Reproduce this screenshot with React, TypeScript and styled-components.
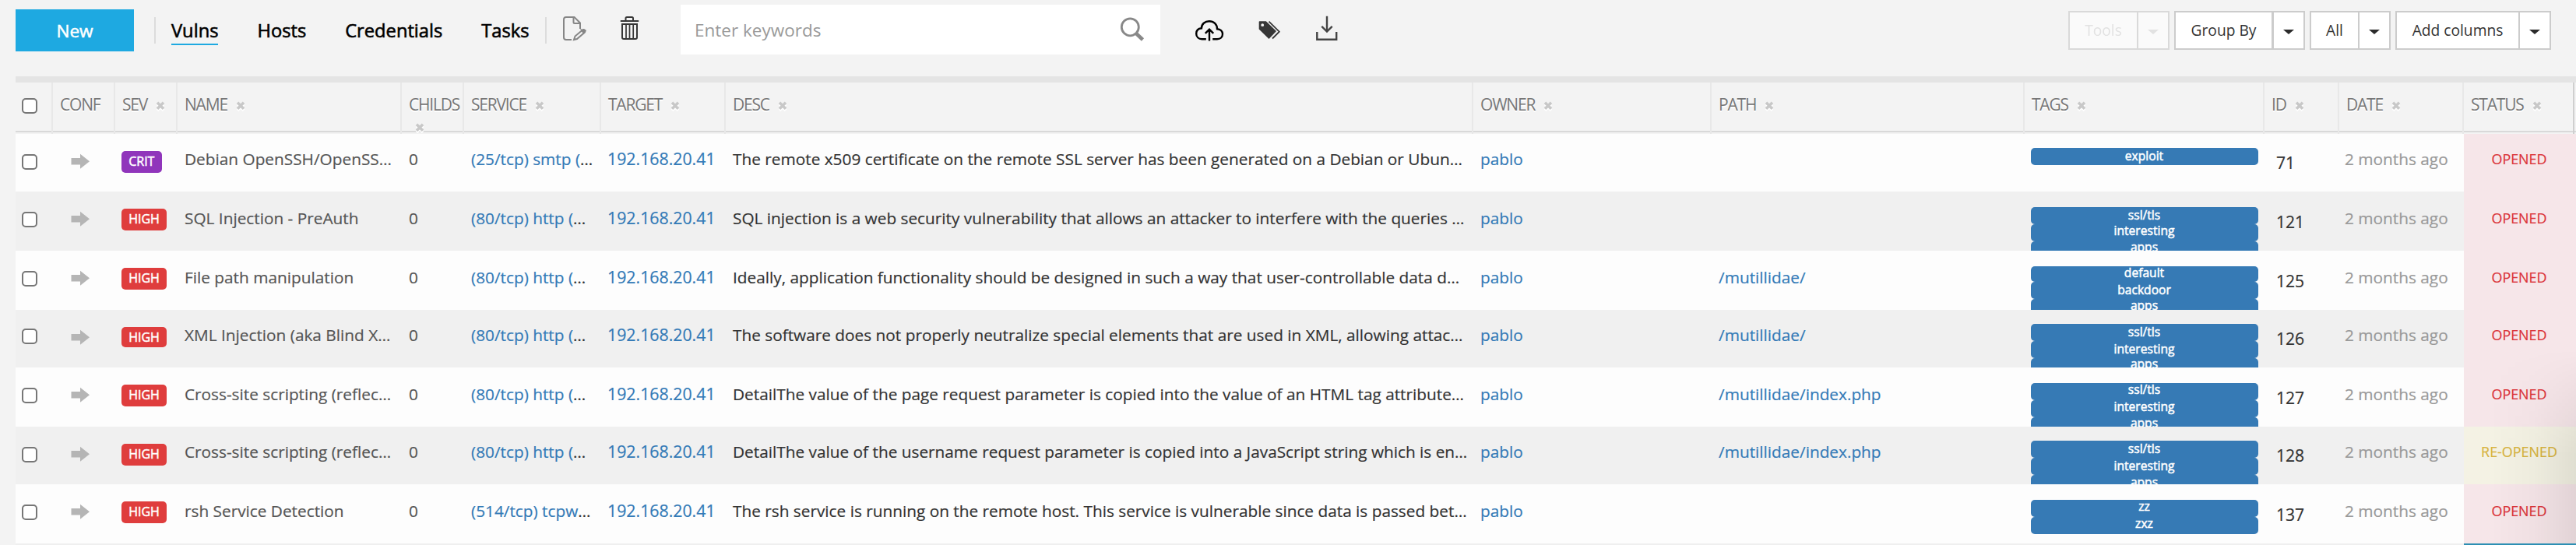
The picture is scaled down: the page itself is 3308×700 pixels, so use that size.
import React from "react";
import styled, { createGlobalStyle } from "styled-components";

const Global = createGlobalStyle`
  * { box-sizing: border-box; }
  body { margin: 0; background: #f3f3f3; overflow: hidden; }
`;

const COLUMNS =
  "48px 80px 80px 288px 80px 176px 160px 960px 306px 402px 308px 96px 160px 144px";

const Page = styled.main`
  position: relative;
  width: 3308px;
  height: 700px;
  overflow: hidden;
  background: #f3f3f3;
  color: #333;
  font-family: "Open Sans", sans-serif;
  font-size: 20.8px;
  white-space: nowrap;
`;

/* ---------- toolbar ---------- */

const Toolbar = styled.header`
  display: flex;
  align-items: flex-start;
  height: 98px;
  padding: 0 32px 0 20px;
`;

const NewButton = styled.button`
  width: 152px;
  height: 54px;
  margin-top: 12px;
  border: 0;
  background: #1ea9e1;
  color: #fff;
  font: 400 22.6px "Open Sans", sans-serif;
  -webkit-text-stroke: 0.5px;
  padding: 0;
`;

const Divider = styled.span<{ $left: number }>`
  width: 2px;
  height: 34px;
  margin: 22px 0 0 ${(p) => p.$left}px;
  background: #dcdcdc;
`;

const Nav = styled.nav`
  display: flex;
  gap: 50px;
  margin: 20px 0 0 20px;
  width: 461px;
`;

const NavLink = styled.a<{ $active?: boolean }>`
  height: 38px;
  line-height: 38px;
  color: #000;
  font-size: 23.7px;
  -webkit-text-stroke: 0.6px;
  border-bottom: 2px solid ${(p) => (p.$active ? "#1ea9e1" : "transparent")};
`;

const ToolIcon = styled.svg<{ $top: number; $left: number }>`
  flex: none;
  display: block;
  margin: ${(p) => p.$top}px 0 0 ${(p) => p.$left}px;
`;

const SearchBox = styled.div`
  display: flex;
  justify-content: space-between;
  width: 616px;
  height: 64px;
  margin: 6px 0 0 52px;
  padding: 0 20px 0 18px;
  background: #fff;
  color: #999;
  font-size: 22.5px;
  line-height: 66px;
`;

const Actions = styled.div`
  display: flex;
  gap: 6px;
  margin: 14px 0 0 auto;
`;

const SplitButton = styled.div<{ $muted?: boolean }>`
  display: flex;
  height: 50px;
  border: 2px solid #ccc;
  background: #fff;
  font-size: 19.2px;
  opacity: ${(p) => (p.$muted ? 0.65 : 1)};
  color: ${(p) => (p.$muted ? "#d9d9d9" : "#333")};
`;

const SplitLabel = styled.span<{ $width: number }>`
  width: ${(p) => p.$width}px;
  line-height: 45px;
  text-align: center;
`;

const SplitToggle = styled.span<{ $divider: number; $muted?: boolean }>`
  display: flex;
  align-items: center;
  justify-content: center;
  width: ${(p) => 38 + p.$divider}px;
  padding-top: 4px;
  border-left: ${(p) => p.$divider}px solid #ccc;
  &::after {
    content: "";
    border: 7px solid transparent;
    border-top: 6px solid ${(p) => (p.$muted ? "#d9d9d9" : "#2b2b2b")};
    border-bottom: 0;
  }
`;

/* ---------- table ---------- */

const Table = styled.section`
  width: 3288px;
  margin-left: 20px;
`;

const TopBar = styled.div`
  height: 8px;
  background: #e4e4e4;
`;

const HeadRow = styled.div`
  display: grid;
  grid-template-columns: ${COLUMNS};
  height: 66px;
  overflow: hidden;
  background: linear-gradient(#d9d9d9, #d9d9d9) 0 62px / 100% 2px no-repeat;
`;

const HeadCell = styled.div<{ $last?: boolean; $bare?: boolean }>`
  display: flex;
  flex-wrap: wrap;
  align-content: flex-start;
  padding-left: ${(p) => (p.$bare ? 0 : 9)}px;
  border-right: 2px solid ${(p) => (p.$last ? "#cfcfcf" : "#e8e8e8")};
  margin-right: ${(p) => (p.$last ? 2 : 0)}px;
  color: #777;
  font-size: 21px;
  letter-spacing: -1.2px;
  line-height: 56px;
  text-shadow: 0 2px 0 #fff;
`;

const Remove = styled.svg<{ $wrapped?: boolean }>`
  display: block;
  flex: none;
  margin: ${(p) => (p.$wrapped ? "-4px 20px 0 8px" : "24px 0 0 11px")};
`;

const Check = styled.span<{ $top: number }>`
  width: 20px;
  height: 20px;
  margin: ${(p) => p.$top}px 0 0 8px;
  border: 2px solid #767676;
  border-radius: 5px;
  background: #fff;
`;

const Row = styled.div<{ $height: number; $odd: boolean }>`
  display: grid;
  grid-template-columns: ${COLUMNS};
  height: ${(p) => p.$height}px;
  overflow: hidden;
  background: ${(p) => (p.$odd ? "#f0f0f0" : "#fdfdfd")};
`;

const Cell = styled.div<{ $top: number; $tone?: string }>`
  padding: ${(p) => p.$top}px 0 0 9px;
  line-height: 64px;
  color: ${(p) => p.$tone ?? "#333"};
  -webkit-text-stroke: 0.2px;
  overflow: hidden;
`;

const AddressCell = styled(Cell)`
  font-size: 21.3px;
  padding-left: 8px;
`;

const IdCell = styled(Cell)`
  padding-left: 15px;
  font-size: 21.1px;
`;

const DateCell = styled(Cell)`
  padding-left: 7px;
`;

const Link = styled.a`
  color: #337ab7;
`;

const ArrowIcon = styled.svg`
  display: block;
  margin: 25px 0 0 23px;
`;

const Severity = styled.span<{ $critical: boolean; $height: number }>`
  justify-self: start;
  height: ${(p) => p.$height}px;
  margin: 22px 0 0 8px;
  padding: 0 9.2px;
  border-radius: 5px;
  background: ${(p) => (p.$critical ? "#9035bb" : "#df3d3d")};
  color: #fff;
  font-size: 16px;
  -webkit-text-stroke: 0.5px;
  line-height: 26px;
`;

const TagList = styled.div<{ $top: number }>`
  padding: ${(p) => p.$top}px 8px 0 8px;
`;

const Tag = styled.div<{ $height: number; $line: number }>`
  height: ${(p) => p.$height}px;
  padding-right: 1px;
  border-radius: 5px;
  background: #367ab5;
  color: #fff;
  font-size: 15.6px;
  -webkit-text-stroke: 0.5px;
  line-height: ${(p) => p.$line}px;
  text-align: center;
`;

const Status = styled.div<{ $reopened: boolean; $top: number }>`
  padding: ${(p) => p.$top}px 2px 0 0;
  background: ${(p) => (p.$reopened ? "#f4f2e4" : "#f6e6e9")};
  color: ${(p) => (p.$reopened ? "#d8b43e" : "#db343b")};
  font-size: 17.9px;
  line-height: 65px;
  text-align: center;
  -webkit-text-stroke: 0.2px;
`;

const NextRow = styled.div`
  display: flex;
  justify-content: flex-end;
  height: 2px;
  background: #efefef;
`;

const NextStatus = styled.span`
  width: 144px;
  background: #2d8fb3;
`;

const CornerShade = styled.div`
  position: absolute;
  right: 0;
  bottom: 2px;
  width: 110px;
  height: 250px;
  background: linear-gradient(to right, rgba(0, 0, 0, 0), rgba(0, 0, 0, 0.025) 50%, rgba(0, 0, 0, 0.08));
  mask-image: linear-gradient(to bottom, transparent, #000 55%);
  pointer-events: none;
`;

type TagSpec = [label: string, line: number, height?: number];

interface Vuln {
  height: number;
  shift: number;
  check?: number;
  badge?: number;
  name: string;
  service: string;
  desc: string;
  path?: string;
  tags: TagSpec[];
  id: number;
  critical?: boolean;
  reopened?: boolean;
}

const VULNS: Vuln[] = [
  {
    height: 74, shift: 0, critical: true, name: "Debian OpenSSH/OpenSS…", service: "(25/tcp) smtp (",
    desc: "The remote x509 certificate on the remote SSL server has been generated on a Debian or Ubun…",
    tags: [["exploit", 20]], id: 71,
  },
  {
    height: 76, shift: 2, name: "SQL Injection - PreAuth", service: "(80/tcp) http (",
    desc: "SQL injection is a web security vulnerability that allows an attacker to interfere with the queries …",
    tags: [["ssl/tls", 20], ["interesting", 16], ["apps", 14]], id: 121,
  },
  {
    height: 76, shift: 2, name: "File path manipulation", service: "(80/tcp) http (",
    desc: "Ideally, application functionality should be designed in such a way that user-controllable data d…",
    path: "/mutillidae/", tags: [["default", 16, 20], ["backdoor", 20], ["apps", 17]], id: 125,
  },
  {
    height: 74, shift: 0, check: 24, badge: 26, name: "XML Injection (aka Blind X…", service: "(80/tcp) http (",
    desc: "The software does not properly neutralize special elements that are used in XML, allowing attac…",
    path: "/mutillidae/", tags: [["ssl/tls", 20], ["interesting", 20], ["apps", 14]], id: 126,
  },
  {
    height: 76, shift: 2, name: "Cross-site scripting (reflec…", service: "(80/tcp) http (",
    desc: "DetailThe value of the page request parameter is copied into the value of an HTML tag attribute…",
    path: "/mutillidae/index.php", tags: [["ssl/tls", 16], ["interesting", 16], ["apps", 14]], id: 127,
  },
  {
    height: 74, shift: 0, name: "Cross-site scripting (reflec…", service: "(80/tcp) http (", reopened: true,
    desc: "DetailThe value of the username request parameter is copied into a JavaScript string which is en…",
    path: "/mutillidae/index.php", tags: [["ssl/tls", 20], ["interesting", 20], ["apps", 18]], id: 128,
  },
  {
    height: 76, shift: 2, name: "rsh Service Detection", service: "(514/tcp) tcpw",
    desc: "The rsh service is running on the remote host. This service is vulnerable since data is passed bet…",
    tags: [["zz", 16], ["zxz", 16]], id: 137,
  },
];

const HEADINGS = [
  "CONF", "SEV", "NAME", "CHILDS", "SERVICE", "TARGET", "DESC", "OWNER", "PATH", "TAGS", "ID", "DATE", "STATUS",
];

const MENUS = [
  { label: "Tools", width: 86, divider: 2, muted: true },
  { label: "Group By", width: 123, divider: 3 },
  { label: "All", width: 60, divider: 2 },
  { label: "Add columns", width: 156, divider: 2 },
];

const RemoveMark = ({ wrapped }: { wrapped?: boolean }) => (
  <Remove width="12" height="13" viewBox="0 0 12 13" $wrapped={wrapped}>
    <path d="M2 3.700 10 11.700M10 3.700 2 11.700" stroke="#fff" strokeWidth="3.600" />
    <path d="M2 1.700 10 9.700M10 1.700 2 9.700" stroke="#c8c8c8" strokeWidth="3.600" />
  </Remove>
);

const EditIcon = () => (
  <ToolIcon $top={20} $left={19} width="32" height="33" viewBox="0 0 32 33" fill="none" stroke="#868686" strokeWidth="2">
    <path d="M13 31H6Q3 31 3 28V5Q3 2 6 2H16.500L24 9.500V17" />
    <path d="M15.500 2V8.500Q15.500 10 17 10H24" />
    <path d="M16 31 17.500 26.500 26.800 18.800Q28.600 17.500 29.800 18.800T29.600 21.800L20 30Z" />
    <path d="M26 18.500 30.500 19.500 28.500 22.500Z" fill="#868686" />
  </ToolIcon>
);

const TrashIcon = () => (
  <ToolIcon $top={20} $left={43} width="26" height="32" viewBox="0 0 26 32" fill="none" stroke="#363636" strokeWidth="2">
    <path d="M.800 7H24.200" />
    <path d="M7.500 6.500V3.500Q7.500 2 9 2H15.500Q17 2 17 3.500V6.500" />
    <path d="M3 11H22V28Q22 30 20 30H5Q3 30 3 28Z" />
    <path d="M8 11V30M12.500 11V30M17.200 11V30" strokeWidth="1.700" />
  </ToolIcon>
);

const SearchIcon = () => (
  <ToolIcon $top={16} $left={0} width="32" height="32" viewBox="0 0 32 32" fill="none" stroke="#888">
    <circle cx="13.300" cy="12.800" r="11" strokeWidth="2.800" />
    <path d="M20.500 20.500 29.500 29" strokeWidth="4.600" />
  </ToolIcon>
);

const CloudIcon = () => (
  <ToolIcon $top={25} $left={44} width="38" height="28" viewBox="0 0 38 28" fill="none" stroke="#000" strokeWidth="2.400">
    <path d="M14.800 25.200H9.500C5 25.200 2.200 22.200 2.200 18.200 2.200 14.200 5 11.700 8.900 11.300 8.900 6 13.300 2.200 18.800 2.200 24.600 2.200 29 6.300 29 12.200 33.200 12.400 36 15 36 18.800 36 22.600 33.200 25.200 29 25.200H23.200" />
    <path d="M19 27.500V13M13.800 17.800 19 12.600 24.200 17.800" />
  </ToolIcon>
);

const TagsIcon = () => (
  <ToolIcon $top={27} $left={44} width="29" height="24" viewBox="0 0 29 24" fill="#363636">
    <path
      fillRule="evenodd"
      d="M.7 1Q.7.3 1.400.3H9.800L23 13 13.500 23 .7 10.500ZM5.200 3.300A1.900 1.900 0 1 0 5.200 7.100 1.900 1.900 0 1 0 5.200 3.300Z"
    />
    <path d="M13.500 .7 26.800 13.700 18 22.500" fill="none" stroke="#363636" strokeWidth="1.800" />
  </ToolIcon>
);

const DownloadIcon = () => (
  <ToolIcon $top={20} $left={44} width="30" height="33" viewBox="0 0 30 33" fill="none" stroke="#444" strokeWidth="2.400">
    <path d="M2.300 21V30.800H27.200V21" />
    <path d="M15 .8V20.500M8.300 13.800 15 20.500 21.700 13.800" />
  </ToolIcon>
);

const Arrow = () => (
  <ArrowIcon width="25" height="21" viewBox="0 0 25 21">
    <path d="M.5 6H12V.8L24 10.300 12 19.800V14.500H.5Z" fill="#b5b5b5" />
  </ArrowIcon>
);

export default function App() {
  return (
    <Page>
      <Global />
      <Toolbar>
        <NewButton>New</NewButton>
        <Divider $left={26} />
        <Nav>
          <NavLink $active>Vulns</NavLink>
          <NavLink>Hosts</NavLink>
          <NavLink>Credentials</NavLink>
          <NavLink>Tasks</NavLink>
        </Nav>
        <Divider $left={19} />
        <EditIcon />
        <TrashIcon />
        <SearchBox>
          Enter keywords
          <SearchIcon />
        </SearchBox>
        <CloudIcon />
        <TagsIcon />
        <DownloadIcon />
        <Actions>
          {MENUS.map((m) => (
            <SplitButton key={m.label} $muted={m.muted}>
              <SplitLabel $width={m.width}>{m.label}</SplitLabel>
              <SplitToggle $divider={m.divider} $muted={m.muted} />
            </SplitButton>
          ))}
        </Actions>
      </Toolbar>

      <Table>
        <TopBar />
        <HeadRow>
          <HeadCell $bare>
            <Check $top={20} />
          </HeadCell>
          {HEADINGS.map((h) => (
            <HeadCell key={h} $last={h === "STATUS"}>
              {h}
              {h !== "CONF" && <RemoveMark wrapped={h === "CHILDS"} />}
            </HeadCell>
          ))}
        </HeadRow>
        {VULNS.map((v, i) => (
          <Row key={v.id} $height={v.height} $odd={i % 2 === 1}>
            <Check $top={v.check ?? 26} />
            <Arrow />
            <Severity $critical={!!v.critical} $height={v.badge ?? 28}>
              {v.critical ? "CRIT" : "HIGH"}
            </Severity>
            <Cell $top={v.shift} $tone="#555">{v.name}</Cell>
            <Cell $top={v.shift} $tone="#555">0</Cell>
            <Cell $top={v.shift}>
              <Link>{v.service}</Link>…
            </Cell>
            <AddressCell $top={v.shift}>
              <Link>192.168.20.41</Link>
            </AddressCell>
            <Cell $top={v.shift}>{v.desc}</Cell>
            <Cell $top={v.shift}>
              <Link>pablo</Link>
            </Cell>
            <Cell $top={v.shift}>
              <Link>{v.path}</Link>
            </Cell>
            <TagList $top={18 + v.shift}>
              {v.tags.map(([label, line, height]) => (
                <Tag key={label} $line={line} $height={height ?? 22}>
                  {label}
                </Tag>
              ))}
            </TagList>
            <IdCell $top={v.shift + 5}>{v.id}</IdCell>
            <DateCell $top={v.shift} $tone="#999">2 months ago</DateCell>
            <Status $top={v.shift} $reopened={!!v.reopened}>
              {v.reopened ? "RE-OPENED" : "OPENED"}
            </Status>
          </Row>
        ))}
        <NextRow>
          <NextStatus />
        </NextRow>
      </Table>
      <CornerShade />
    </Page>
  );
}
